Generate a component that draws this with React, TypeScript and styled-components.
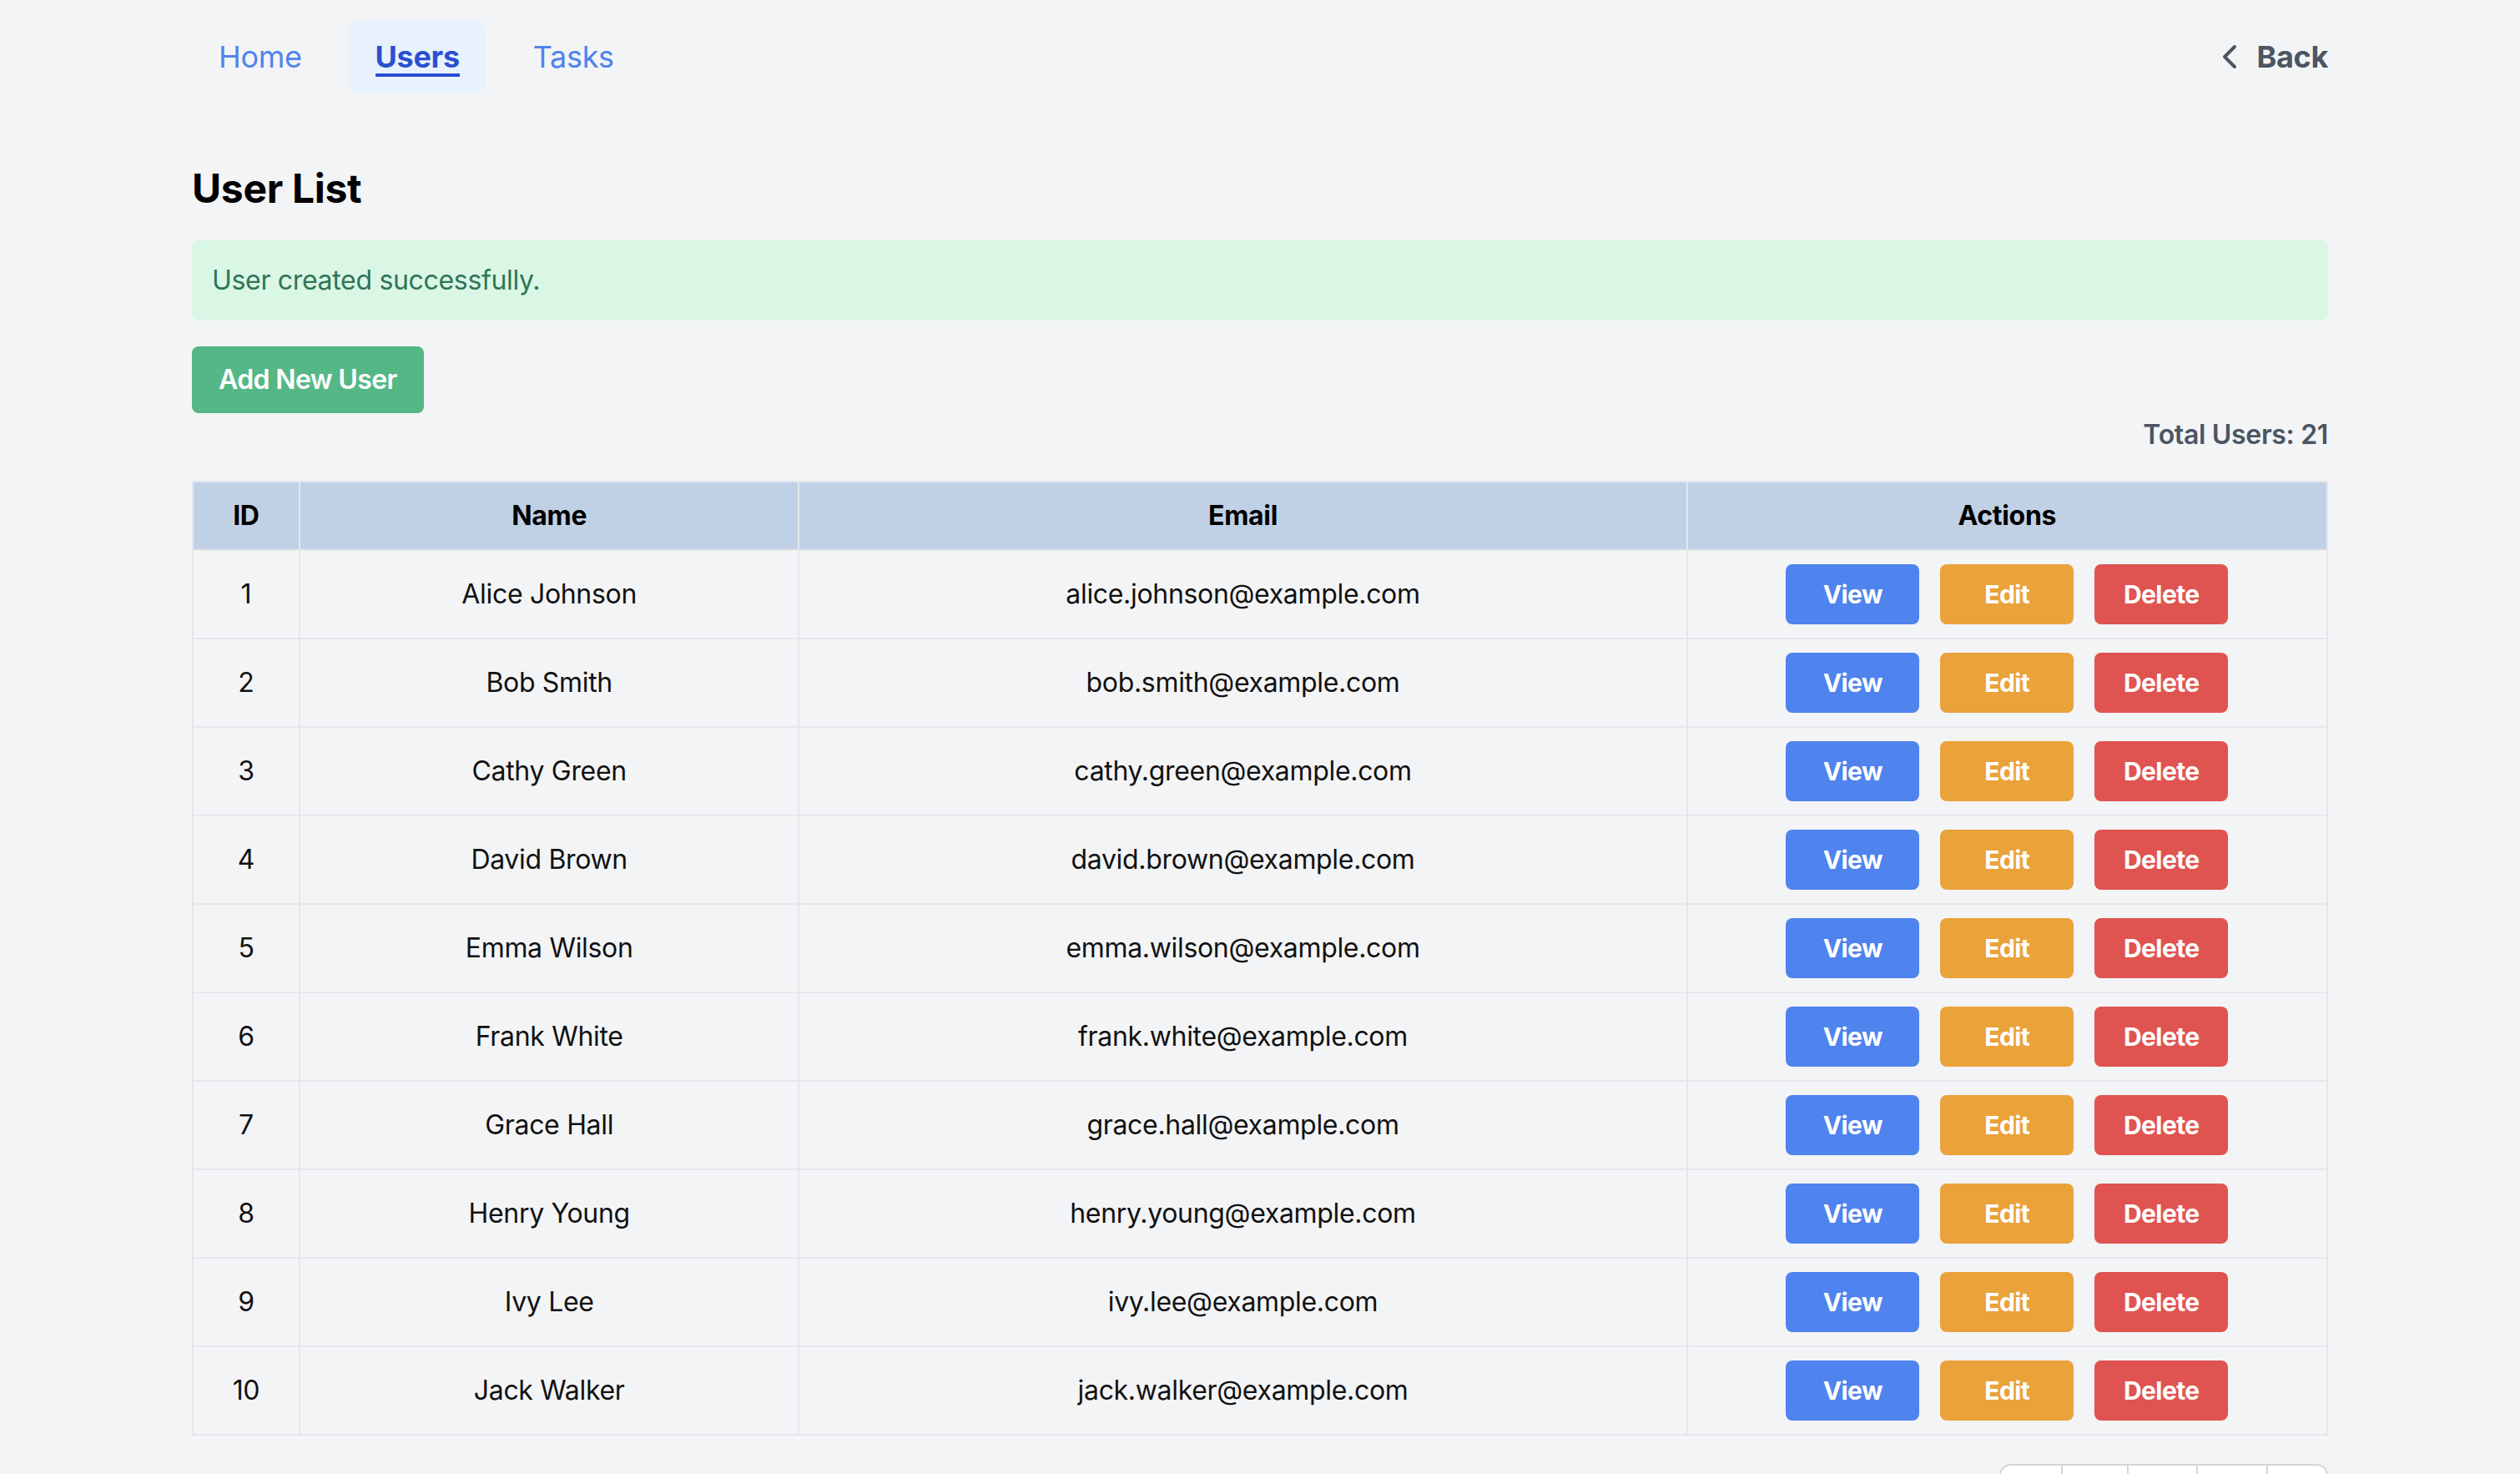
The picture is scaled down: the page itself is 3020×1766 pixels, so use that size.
import React from 'react';
import styled, { createGlobalStyle } from 'styled-components';
import { ChevronLeft } from 'lucide-react';

const GlobalStyle = createGlobalStyle`
  * { box-sizing: border-box; }
  body {
    margin: 0;
    background: #f3f4f6;
    font-family: Inter, "Noto Sans", "Liberation Sans", sans-serif;
    letter-spacing: -0.02em;
    color: #111827;
  }
`;

type User = { id: number; name: string; email: string };

const users: User[] = [
  { id: 1, name: 'Alice Johnson', email: 'alice.johnson@example.com' },
  { id: 2, name: 'Bob Smith', email: 'bob.smith@example.com' },
  { id: 3, name: 'Cathy Green', email: 'cathy.green@example.com' },
  { id: 4, name: 'David Brown', email: 'david.brown@example.com' },
  { id: 5, name: 'Emma Wilson', email: 'emma.wilson@example.com' },
  { id: 6, name: 'Frank White', email: 'frank.white@example.com' },
  { id: 7, name: 'Grace Hall', email: 'grace.hall@example.com' },
  { id: 8, name: 'Henry Young', email: 'henry.young@example.com' },
  { id: 9, name: 'Ivy Lee', email: 'ivy.lee@example.com' },
  { id: 10, name: 'Jack Walker', email: 'jack.walker@example.com' },
];

const Page = styled.div`
  min-height: 100vh;
  background: #f3f4f6;
`;

const Container = styled.div`
  max-width: 2560px;
  margin: 0 auto;
  padding-bottom: 80px;
`;

// Barre de navigation
const Nav = styled.nav`
  display: flex;
  justify-content: space-between;
  align-items: center;
  padding: 24px 0;
`;

const NavLinks = styled.div`
  display: flex;
  gap: 24px;
`;

const NavLink = styled.a<{ $active?: boolean }>`
  display: flex;
  align-items: center;
  height: 88px;
  padding: 0 32px;
  border-radius: 14px;
  font-size: 36px;
  font-weight: ${(p) => (p.$active ? 700 : 400)};
  color: ${(p) => (p.$active ? '#2c4fd1' : '#4f84ec')};
  background: ${(p) => (p.$active ? '#e8f2fc' : 'transparent')};
  text-decoration: none;
  cursor: pointer;

  span {
    padding-top: 4px;
    border-bottom: 4px solid ${(p) => (p.$active ? '#2c4fd1' : 'transparent')};
    line-height: 40px;
  }
`;

const BackLink = styled.a`
  display: flex;
  align-items: center;
  gap: 8px;
  font-size: 36px;
  font-weight: 700;
  color: #4b5563;
  cursor: pointer;
`;

const Title = styled.h1`
  margin: 58px 0 30px;
  font-size: 48px;
  line-height: 64px;
  font-weight: 700;
  color: #000;
`;

const Alert = styled.div`
  padding: 24px;
  border-radius: 8px;
  background: #daf7e6;
  color: #2f7556;
  font-size: 32px;
  line-height: 48px;
`;

const AddButton = styled.button`
  display: block;
  margin-top: 31px;
  padding: 16px 32px;
  border: none;
  border-radius: 8px;
  background: #55b786;
  color: #fff;
  font-family: inherit;
  font-size: 32px;
  line-height: 48px;
  font-weight: 600;
  letter-spacing: -0.02em;
  cursor: pointer;
`;

const Total = styled.div`
  text-align: right;
  margin-top: 2px;
  margin-bottom: 31px;
  font-size: 32px;
  line-height: 48px;
  font-weight: 600;
  color: #4b5563;
`;

const Table = styled.table`
  width: 100%;
  border-collapse: collapse;
  table-layout: fixed;
  border: 2px solid #e5e7eb;
`;

const Col = styled.col<{ $w: string }>`
  width: ${(p) => p.$w};
`;

const Th = styled.th`
  padding: 16px;
  background: #c0d1e6;
  border: 2px solid #e5e7eb;
  font-size: 32px;
  line-height: 48px;
  font-weight: 700;
  color: #000;
  text-align: center;
`;

const Td = styled.td`
  height: 106px;
  padding: 16px;
  border: 2px solid #e5e7eb;
  font-size: 32px;
  line-height: 44px;
  color: #111;
  text-align: center;
`;

const Actions = styled.div`
  display: flex;
  justify-content: center;
  gap: 25px;
`;

const ActionButton = styled.button<{ $color: string }>`
  width: 160px;
  height: 72px;
  border: none;
  border-radius: 8px;
  background: ${(p) => p.$color};
  color: #fff;
  font-family: inherit;
  font-size: 30px;
  font-weight: 700;
  letter-spacing: -0.02em;
  cursor: pointer;
`;

const Pagination = styled.div`
  display: flex;
  justify-content: flex-end;
  margin-top: 34px;
`;

const PageGroup = styled.div`
  display: flex;
  background: #fff;
  border: 2px solid #d1d5db;
  border-radius: 14px;
  overflow: hidden;
`;

const PageItem = styled.button<{ $w: number }>`
  width: ${(p) => p.$w}px;
  height: 76px;
  border: none;
  border-left: 2px solid #d1d5db;
  background: #fff;
  color: #4b5563;
  font-family: inherit;
  font-size: 30px;
  cursor: pointer;

  &:first-child {
    border-left: none;
  }
`;

export default function App() {
  return (
    <Page>
      <GlobalStyle />
      <Container>
        <Nav>
          <NavLinks>
            <NavLink><span>Home</span></NavLink>
            <NavLink $active><span>Users</span></NavLink>
            <NavLink><span>Tasks</span></NavLink>
          </NavLinks>
          <BackLink>
            <ChevronLeft size={48} strokeWidth={2} />
            Back
          </BackLink>
        </Nav>

        <Title>User List</Title>
        <Alert>User created successfully.</Alert>
        <AddButton>Add New User</AddButton>
        <Total>Total Users: 21</Total>

        <Table>
          <colgroup>
            <Col $w="5%" />
            <Col $w="23.4%" />
            <Col $w="41.6%" />
            <Col $w="30%" />
          </colgroup>
          <thead>
            <tr>
              <Th>ID</Th>
              <Th>Name</Th>
              <Th>Email</Th>
              <Th>Actions</Th>
            </tr>
          </thead>
          <tbody>
            {users.map((u) => (
              <tr key={u.id}>
                <Td>{u.id}</Td>
                <Td>{u.name}</Td>
                <Td>{u.email}</Td>
                <Td>
                  <Actions>
                    <ActionButton $color="#4f83ee">View</ActionButton>
                    <ActionButton $color="#eaa23b">Edit</ActionButton>
                    <ActionButton $color="#df5450">Delete</ActionButton>
                  </Actions>
                </Td>
              </tr>
            ))}
          </tbody>
        </Table>

        <Pagination>
          <PageGroup>
            <PageItem $w={72}>«</PageItem>
            <PageItem $w={79}>1</PageItem>
            <PageItem $w={83}>2</PageItem>
            <PageItem $w={84}>3</PageItem>
            <PageItem $w={72}>»</PageItem>
          </PageGroup>
        </Pagination>
      </Container>
    </Page>
  );
}
